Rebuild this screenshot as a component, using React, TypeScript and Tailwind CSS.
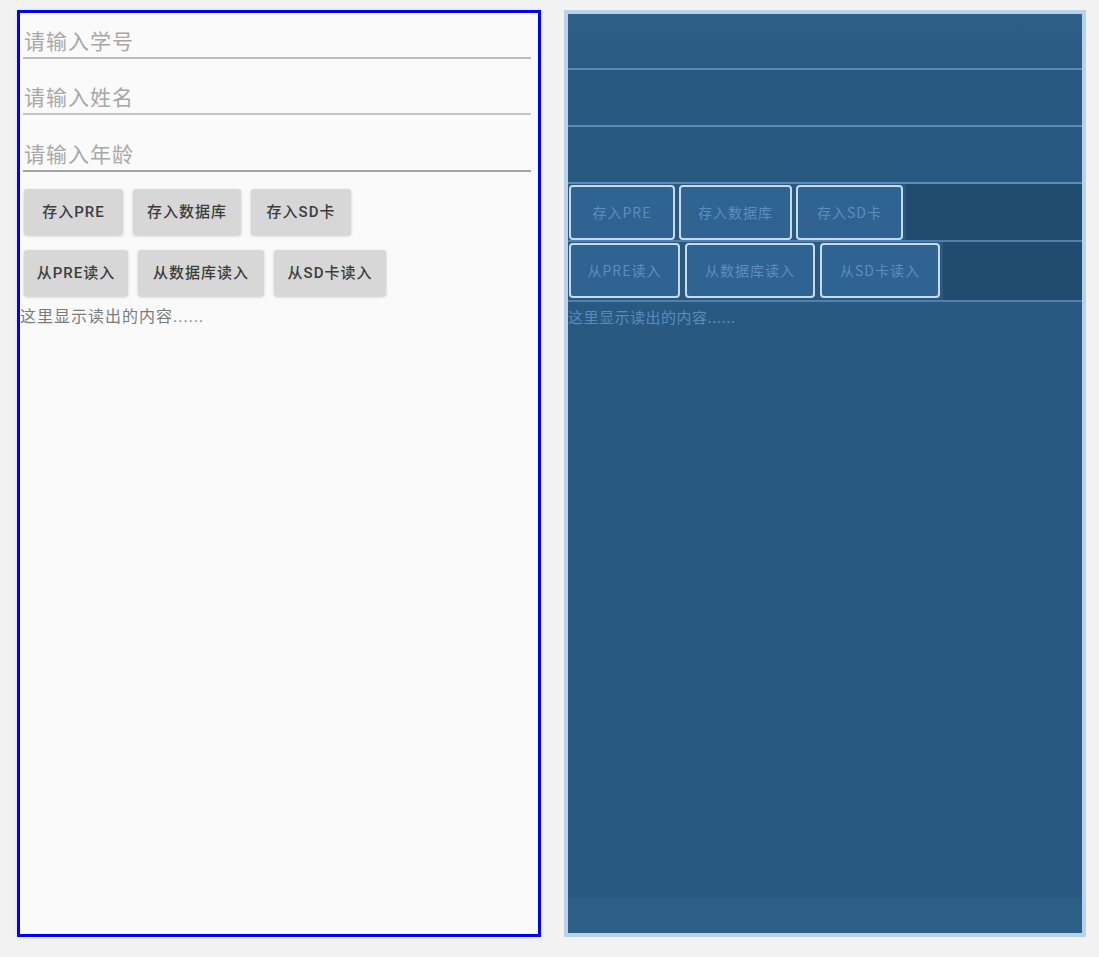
import React from "react";

const FONT = { fontFamily: "Roboto, 'Noto Sans CJK SC', 'Noto Sans', sans-serif" };
const BP_FONT = { fontFamily: "'Noto Sans CJK SC', 'Liberation Serif', serif" };

function Field({ hint, h, line }: { hint: string; h: string; line: string }) {
  return (
    <div className={`${h} pl-[3px] pr-[7px]`}>
      <div className="pt-[17px] pl-[1px] text-[21px] tracking-[1px] leading-[24px] text-[#a8a8a8]">{hint}</div>
      <div className={`mt-[3px] h-[2px] ${line}`} />
    </div>
  );
}

function Btn({ label, w }: { label: string; w: string }) {
  return (
    <div
      className={`${w} h-[46px] flex items-center justify-center rounded-[3px] bg-[#d7d7d7] shadow-[0_1px_3px_rgba(0,0,0,0.2)] text-[15px] tracking-[1px] font-medium text-[#3c3c3c]`}
    >
      {label}
    </div>
  );
}

function BpBtn({ label, w }: { label: string; w: string }) {
  return (
    <div
      className={`${w} h-[55px] flex items-center justify-center rounded-[4px] border-2 border-[#c6dbef] bg-[#2f6392] text-[14px] tracking-[1px] text-[#5d8fbe]`}
      style={BP_FONT}
    >
      {label}
    </div>
  );
}

export default function App() {
  return (
    <div className="w-[1099px] h-[957px] bg-[#f2f2f2] flex pl-[17px] pt-[10px] gap-[23px]" style={FONT}>
      {/* Design view */}
      <div className="w-[524px] h-[927px] border-[3px] border-[#0000ff] bg-[#fafafa] shadow-[0_0_4px_rgba(0,0,0,0.08)] flex flex-col">
        <Field hint="请输入学号" h="h-[56px]" line="bg-[#bcbcbc]" />
        <Field hint="请输入姓名" h="h-[57px]" line="bg-[#c4c6c8]" />
        <Field hint="请输入年龄" h="h-[57px]" line="bg-[#a3a3a3]" />
        <div className="flex gap-[10px] pl-[4px] pt-[6px]">
          <Btn label="存入PRE" w="w-[99px]" />
          <Btn label="存入数据库" w="w-[108px]" />
          <Btn label="存入SD卡" w="w-[100px]" />
        </div>
        <div className="flex gap-[10px] pl-[4px] pt-[15px]">
          <Btn label="从PRE读入" w="w-[104px]" />
          <Btn label="从数据库读入" w="w-[126px]" />
          <Btn label="从SD卡读入" w="w-[112px]" />
        </div>
        <div className="pt-[10px] text-[16px] tracking-[1px] leading-[22px] text-[#7a7a7a]">这里显示读出的内容......</div>
      </div>

      {/* Blueprint view */}
      <div className="w-[522px] h-[927px] border-[4px] border-[#b8d2ea] bg-[#295981] flex flex-col">
        <div className="h-[56px] border-b-[2px] border-[#5b8bbb] bg-[linear-gradient(#2e5f87,#2a5a82)]" />
        <div className="h-[57px] border-b-[2px] border-[#5b8bbb]" />
        <div className="h-[57px] border-b-[2px] border-[#5b8bbb]" />
        <div className="h-[58px] flex bg-[#214c6f] border-b-[2px] border-[#4f80ae]">
          <div className="flex gap-[4px] bg-[#295981] pl-[1px] pt-[1px] pr-[3px]">
            <BpBtn label="存入PRE" w="w-[106px]" />
            <BpBtn label="存入数据库" w="w-[113px]" />
            <BpBtn label="存入SD卡" w="w-[107px]" />
          </div>
        </div>
        <div className="h-[60px] flex bg-[#214c6f] border-b-[2px] border-[#4f80ae]">
          <div className="flex gap-[5px] bg-[#295981] pl-[1px] pt-[1px] pr-[3px]">
            <BpBtn label="从PRE读入" w="w-[111px]" />
            <BpBtn label="从数据库读入" w="w-[130px]" />
            <BpBtn label="从SD卡读入" w="w-[120px]" />
          </div>
        </div>
        <div className="flex-1 flex flex-col">
          <div className="pt-[5px] text-[15px] tracking-[0.5px] leading-[20px] text-[#5a8bb8]" style={BP_FONT}>
            这里显示读出的内容......
          </div>
          <div className="flex-1" />
          <div className="h-[35px] bg-[#2d5e87]" />
        </div>
      </div>
    </div>
  );
}
